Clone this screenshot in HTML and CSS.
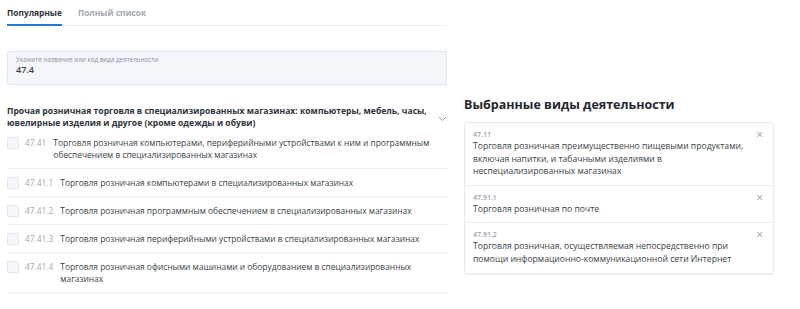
FILE: index.html
```html
<!DOCTYPE html>
<html lang="ru">
<head>
    <meta charset="UTF-8">
    <title>Виды деятельности</title>
    <link rel="stylesheet" href="styles.css">
</head>
<body>
    <div class="page">
        <section class="picker">
            <nav class="tabs">
                <span class="tab active">Популярные</span>
                <span class="tab">Полный список</span>
            </nav>

            <label class="search">
                <span class="search-label">Укажите название или код вида деятельности</span>
                <span class="search-value">47.4</span>
            </label>

            <div class="group">
                <div class="group-head">
                    <div class="group-title">Прочая розничная торговля в специализированных магазинах: компьютеры, мебель, часы, ювелирные изделия и другое (кроме одежды и обуви)</div>
                    <svg class="chevron" width="9" height="6" viewBox="0 0 9 6"><path d="M1 1l3.5 3.5L8 1" fill="none" stroke="#9aa3ae" stroke-width="1"/></svg>
                </div>
                <div class="row">
                    <span class="box"></span>
                    <span class="code">47.41</span>
                    <span class="name">Торговля розничная компьютерами, периферийными устройствами к ним и программным обеспечением в специализированных магазинах</span>
                </div>
                <div class="row">
                    <span class="box"></span>
                    <span class="code">47.41.1</span>
                    <span class="name">Торговля розничная компьютерами в специализированных магазинах</span>
                </div>
                <div class="row">
                    <span class="box"></span>
                    <span class="code">47.41.2</span>
                    <span class="name">Торговля розничная программным обеспечением в специализированных магазинах</span>
                </div>
                <div class="row">
                    <span class="box"></span>
                    <span class="code">47.41.3</span>
                    <span class="name">Торговля розничная периферийными устройствами в специализированных магазинах</span>
                </div>
                <div class="row">
                    <span class="box"></span>
                    <span class="code">47.41.4</span>
                    <span class="name">Торговля розничная офисными машинами и оборудованием в специализированных магазинах</span>
                </div>
            </div>
        </section>

        <aside class="selected">
            <h2>Выбранные виды деятельности</h2>
            <div class="card">
                <div class="item">
                    <div class="item-body">
                        <div class="item-code">47.11</div>
                        <div class="item-name">Торговля розничная преимущественно пищевыми продуктами, включая напитки, и табачными изделиями в неспециализированных магазинах</div>
                    </div>
                    <span class="remove">&times;</span>
                </div>
                <div class="item">
                    <div class="item-body">
                        <div class="item-code">47.91.1</div>
                        <div class="item-name">Торговля розничная по почте</div>
                    </div>
                    <span class="remove">&times;</span>
                </div>
                <div class="item">
                    <div class="item-body">
                        <div class="item-code">47.91.2</div>
                        <div class="item-name">Торговля розничная, осуществляемая непосредственно при помощи информационно-коммуникационной сети Интернет</div>
                    </div>
                    <span class="remove">&times;</span>
                </div>
            </div>
        </aside>
    </div>
</body>
</html>
```

FILE: styles.css
```css
* {
    margin: 0;
    padding: 0;
    box-sizing: border-box;
}

body {
    font-family: 'Open Sans', 'Noto Sans', sans-serif;
    color: #3a3f47;
    background: #fff;
}

.page {
    display: flex;
    gap: 17px;
    padding: 0 26px 0 7px;
}

.picker {
    width: 440px;
    flex-shrink: 0;
}

.tabs {
    display: flex;
    gap: 16px;
    border-bottom: 1px solid #eceef2;
    padding-top: 7px;
}

.tab {
    font-size: 8.4px;
    font-weight: 700;
    color: #a3a9b1;
    line-height: 12px;
    padding-bottom: 5px;
    border-bottom: 2px solid transparent;
    margin-bottom: -1px;
}

.tab.active {
    color: #2e333b;
    border-bottom-color: #1f7ae0;
}

.search {
    display: block;
    margin-top: 25px;
    height: 34px;
    background: #f3f6fa;
    border: 1px solid #e2e7ee;
    border-radius: 2px;
    padding: 3px 8px 0;
}

.search-label {
    display: block;
    font-size: 6.3px;
    color: #8a919b;
    line-height: 9px;
}

.search-value {
    display: block;
    font-size: 9px;
    font-weight: 600;
    color: #3a3f47;
    line-height: 12px;
}

.group {
    margin-top: 20px;
}

.group-head {
    display: flex;
    align-items: center;
    gap: 8px;
}

.group-title {
    font-size: 8.6px;
    font-weight: 700;
    color: #2e333b;
    line-height: 12px;
}

.chevron {
    flex-shrink: 0;
    margin-top: 4px;
}

.row {
    display: flex;
    align-items: flex-start;
    border-bottom: 1px solid #eceef2;
    padding: 8px 0 7px;
    font-size: 8.4px;
    line-height: 12px;
}

.row:first-of-type {
    padding-top: 6px;
}

.box {
    width: 12px;
    height: 12px;
    border: 1px solid #e3e7ed;
    background: #f5f7fa;
    border-radius: 1px;
    flex-shrink: 0;
    margin-right: 6px;
}

.code {
    color: #a3a9b1;
    flex-shrink: 0;
    margin-right: 7px;
}

.name {
    padding-right: 10px;
}

.selected {
    width: 310px;
    flex-shrink: 0;
    padding-top: 96px;
}

.selected h2 {
    font-size: 12.5px;
    font-weight: 700;
    color: #24282f;
    line-height: 18px;
    margin-bottom: 8px;
}

.card {
    border: 1px solid #e6e9ee;
    border-radius: 3px;
    box-shadow: 0 1px 2px rgba(0, 0, 0, 0.06);
}

.item {
    display: flex;
    padding: 6px 10px 7px 8px;
    border-bottom: 1px solid #eceef2;
}

.item:last-child {
    border-bottom: none;
    padding-bottom: 8px;
}

.item-body {
    flex: 1;
}

.item-code {
    font-size: 7px;
    font-weight: 600;
    color: #9aa1aa;
    line-height: 11px;
}

.item-name {
    font-size: 8.6px;
    line-height: 12.5px;
    padding-right: 12px;
}

.remove {
    font-size: 12px;
    line-height: 12px;
    color: #9aa1aa;
}
```
